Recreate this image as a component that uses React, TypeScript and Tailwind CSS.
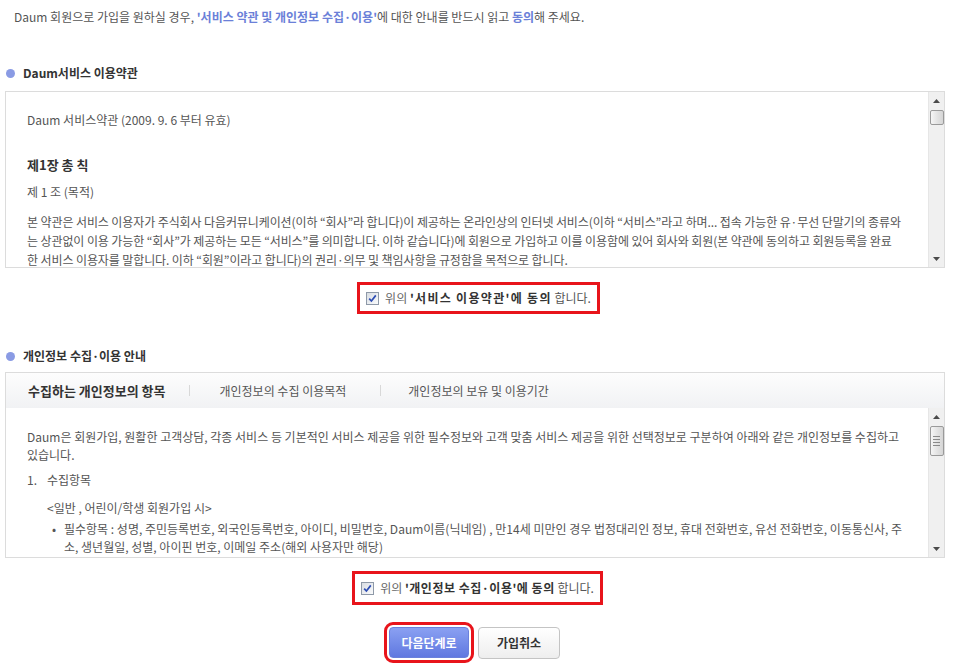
import React from "react";

const Check = () => (
  <span className="inline-flex w-[13px] h-[13px] border border-[#8e99a8] bg-gradient-to-br from-[#d9dde3] to-[#fafbfc] items-center justify-center shrink-0">
    <svg width="9" height="9" viewBox="0 0 9 9">
      <path d="M1.2 4.6 L3.4 7 L7.8 1.4" stroke="#2d4db3" strokeWidth="1.7" fill="none" />
    </svg>
  </span>
);

const Up = () => (
  <svg width="7" height="4" viewBox="0 0 7 4">
    <path d="M0 4 L3.5 0 L7 4 Z" fill="#4a4a4a" />
  </svg>
);
const Down = () => (
  <svg width="7" height="4" viewBox="0 0 7 4">
    <path d="M0 0 L3.5 4 L7 0 Z" fill="#4a4a4a" />
  </svg>
);

const Scrollbar = ({ thumbH, grip }: { thumbH: number; grip?: boolean }) => (
  <div className="w-[16px] shrink-0 bg-[#f0f0f0] border-l border-[#e6e6e6] flex flex-col items-center">
    <div className="h-[17px] flex items-center justify-center">
      <Up />
    </div>
    <div
      className="w-[14px] mt-[1px] rounded-[2px] border border-[#9a9a9a] bg-gradient-to-r from-[#f6f6f6] via-[#e4e4e4] to-[#d6d6d6] flex flex-col items-center justify-center gap-[2px]"
      style={{ height: thumbH }}
    >
      {grip && (
        <>
          <span className="block w-[7px] h-px bg-[#8a8a8a]" />
          <span className="block w-[7px] h-px bg-[#8a8a8a]" />
          <span className="block w-[7px] h-px bg-[#8a8a8a]" />
          <span className="block w-[7px] h-px bg-[#8a8a8a]" />
        </>
      )}
    </div>
    <div className="flex-1" />
    <div className="h-[17px] flex items-center justify-center">
      <Down />
    </div>
  </div>
);

const Header = ({ children }: { children: React.ReactNode }) => (
  <div className="flex items-center h-[16px] pl-[6px]">
    <span className="w-[9px] h-[9px] rounded-full bg-[#8a9be4] mr-[8px]" />
    <span className="font-bold text-[#333]">{children}</span>
  </div>
);

export default function App() {
  return (
    <div className="w-[955px] h-[671px] bg-white text-[12px] leading-[16px] text-[#555] font-['Noto_Sans_CJK_KR','Noto_Sans',sans-serif] tracking-[0px] overflow-hidden">
      <p className="pl-[14px] pt-[9px] whitespace-nowrap">
        Daum 회원으로 가입을 원하실 경우,{" "}
        <b className="text-[#6b80d8]">'서비스 약관 및 개인정보 수집·이용'</b>에 대한 안내를 반드시 읽고{" "}
        <b className="text-[#6b80d8]">동의</b>해 주세요.
      </p>

      <div className="mt-[40px]">
        <Header>Daum서비스 이용약관</Header>
      </div>

      <div className="mt-[10px] ml-[5px] w-[940px] h-[177px] border border-[#dcdcdc] flex">
        <div className="flex-1 overflow-hidden pl-[21px] pt-[20px] whitespace-nowrap">
          <div className="leading-[16px]">Daum 서비스약관 (2009. 9. 6 부터 유효)</div>
          <div className="mt-[29px] leading-[16px] font-bold text-[#333] text-[13px]">제1장 총 칙</div>
          <div className="mt-[11px] leading-[16px]">제 1 조 (목적)</div>
          <div className="mt-[12px] leading-[19px] tracking-[-0.1px]">
            <div>본 약관은 서비스 이용자가 주식회사 다음커뮤니케이션(이하 “회사”라 합니다)이 제공하는 온라인상의 인터넷 서비스(이하 “서비스”라고 하며... 접속 가능한 유·무선 단말기의 종류와</div>
            <div>는 상관없이 이용 가능한 “회사”가 제공하는 모든 “서비스”를 의미합니다. 이하 같습니다)에 회원으로 가입하고 이를 이용함에 있어 회사와 회원(본 약관에 동의하고 회원등록을 완료</div>
            <div>한 서비스 이용자를 말합니다. 이하 “회원”이라고 합니다)의 권리·의무 및 책임사항을 규정함을 목적으로 합니다.</div>
          </div>
        </div>
        <Scrollbar thumbH={15} />
      </div>

      <div className="mt-[14px] flex justify-center pl-[2px]">
        <div className="border-[3px] border-[#e8141b] h-[32px] px-[6px] flex items-center gap-[6px] whitespace-nowrap">
          <Check />
          <span>
            <span className="text-[#666]">위의 </span>
            <b className="text-[#333] tracking-[1.3px]">'서비스 이용약관'에 동의</b> 합니다.
          </span>
        </div>
      </div>

      <div className="mt-[34px]">
        <Header>개인정보 수집·이용 안내</Header>
      </div>

      <div className="mt-[8px] ml-[5px] w-[940px] h-[186px] border border-[#dcdcdc] flex flex-col">
        <div className="h-[35px] shrink-0 bg-gradient-to-b from-[#fdfdfd] to-[#f1f2f4] flex items-center pl-[22px] whitespace-nowrap">
          <span className="font-bold text-[#333] text-[13px]">수집하는 개인정보의 항목</span>
          <span className="w-px h-[11px] bg-[#d8d8d8] ml-[24px] mr-[29px]" />
          <span>개인정보의 수집 이용목적</span>
          <span className="w-px h-[11px] bg-[#d8d8d8] ml-[34px] mr-[27px]" />
          <span>개인정보의 보유 및 이용기간</span>
        </div>
        <div className="flex-1 flex min-h-0">
          <div className="flex-1 overflow-hidden pl-[21px] pt-[20px] whitespace-nowrap">
            <div className="leading-[18px]">
              <div>Daum은 회원가입, 원활한 고객상담, 각종 서비스 등 기본적인 서비스 제공을 위한 필수정보와 고객 맞춤 서비스 제공을 위한 선택정보로 구분하여 아래와 같은 개인정보를 수집하고</div>
              <div>있습니다.</div>
            </div>
            <div className="mt-[7px] leading-[18px] flex">
              <span className="w-[20px]">1.</span>
              <span>수집항목</span>
            </div>
            <div className="mt-[10px] pl-[20px] leading-[18px]">&lt;일반 , 어린이/학생 회원가입 시&gt;</div>
            <div className="mt-[3px] pl-[20px] leading-[18px] flex">
              <span className="w-[17px] pl-[5px]">•</span>
              <div>
                <div>필수항목 : 성명, 주민등록번호, 외국인등록번호, 아이디, 비밀번호, Daum이름(닉네임) , 만14세 미만인 경우 법정대리인 정보, 휴대 전화번호, 유선 전화번호, 이동통신사, 주</div>
                <div>소, 생년월일, 성별, 아이핀 번호, 이메일 주소(해외 사용자만 해당)</div>
              </div>
            </div>
          </div>
          <Scrollbar thumbH={30} grip />
        </div>
      </div>

      <div className="mt-[13px] flex justify-center">
        <div className="border-[3px] border-[#e8141b] h-[34px] px-[6px] flex items-center gap-[6px] whitespace-nowrap">
          <Check />
          <span>
            <span className="text-[#666]">위의 </span>
            <b className="text-[#333] tracking-[0.5px]">'개인정보 수집·이용'에 동의</b> 합니다.
          </span>
        </div>
      </div>

      <div className="mt-[17px] flex justify-center items-center gap-[4px] pr-[11px]">
        <div className="border-[3px] border-[#e8141b] rounded-[9px] p-[2px]">
          <button className="w-[80px] h-[31px] rounded-[4px] bg-gradient-to-b from-[#8aa0f2] to-[#6078e0] border border-[#6a80dc] text-white font-bold text-[12px]">
            다음단계로
          </button>
        </div>
        <button className="w-[82px] h-[32px] rounded-[4px] bg-gradient-to-b from-white to-[#eeeeee] border border-[#c4c4c4] text-[#333] font-bold text-[12px]">
          가입취소
        </button>
      </div>
    </div>
  );
}
